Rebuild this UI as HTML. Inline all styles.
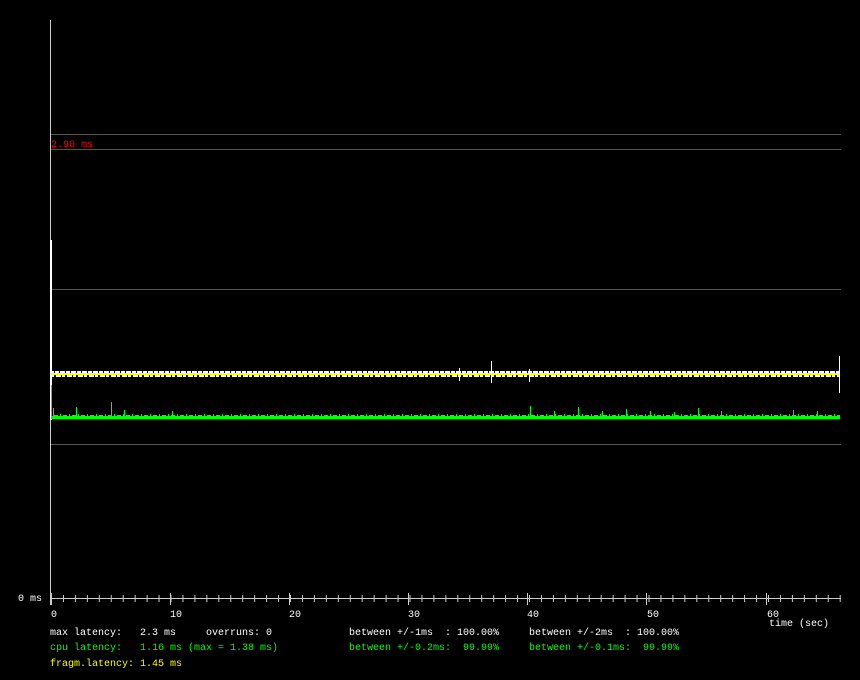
<!DOCTYPE html>
<html><head><meta charset="utf-8"><style>
html,body{margin:0;padding:0;background:#000;width:860px;height:680px;overflow:hidden}
svg{display:block}
text{font-family:"Liberation Mono",monospace;font-size:10px}
</style></head><body>
<svg width="860" height="680" viewBox="0 0 860 680" xmlns="http://www.w3.org/2000/svg">
<defs>
<pattern id="minor" x="51" y="0" width="11.95" height="680" patternUnits="userSpaceOnUse">
<rect x="0" y="595" width="1" height="7" fill="#ccc"/>
</pattern>
<pattern id="wn" x="0" y="0" width="11" height="680" patternUnits="userSpaceOnUse">
<rect x="0" y="371" width="4" height="2" fill="#fff"/>
<rect x="5" y="371" width="5" height="2" fill="#fff"/>
<rect x="1" y="375" width="5" height="2" fill="#fff"/>
<rect x="7" y="375" width="3" height="2" fill="#fff"/>
</pattern>
<pattern id="gn" x="0" y="0" width="9" height="680" patternUnits="userSpaceOnUse">
<rect x="0" y="415" width="4" height="1" fill="#0f0"/>
<rect x="6" y="414" width="1" height="2" fill="#0f0"/>
</pattern>
</defs>
<g fill="#555">
<rect x="51" y="134" width="790" height="1"/>
<rect x="51" y="149" width="790" height="1"/>
<rect x="51" y="289" width="790" height="1"/>
<rect x="51" y="444" width="790" height="1"/>
</g>
<text x="51" y="147" fill="#f00">2.90 ms</text>
<rect x="50" y="20" width="1" height="585" fill="#ccc"/>
<rect x="50" y="240" width="2" height="180" fill="#fff"/>
<rect x="51" y="371" width="789" height="6" fill="url(#wn)"/>
<rect x="51" y="373" width="789" height="2" fill="#ff0"/>
<g fill="#fff">
<rect x="459" y="368" width="1" height="13"/>
<rect x="491" y="361" width="1" height="22"/>
<rect x="529" y="369" width="1" height="13"/>
<rect x="839" y="356" width="1" height="37"/>
</g>
<rect x="51" y="414" width="789" height="2" fill="url(#gn)"/>
<rect x="51" y="416" width="789" height="3" fill="#0f0"/>
<g fill="#0f0">
<rect x="51" y="385" width="1" height="31"/>
<rect x="53" y="408" width="1" height="8"/>
<rect x="76" y="407" width="1" height="9"/>
<rect x="111" y="402" width="1" height="14"/>
<rect x="124" y="410" width="1" height="6"/>
<rect x="172" y="411" width="1" height="5"/>
<rect x="530" y="406" width="1" height="10"/>
<rect x="554" y="411" width="1" height="5"/>
<rect x="578" y="407" width="1" height="9"/>
<rect x="602" y="411" width="1" height="5"/>
<rect x="626" y="409" width="1" height="7"/>
<rect x="650" y="411" width="1" height="5"/>
<rect x="674" y="412" width="1" height="4"/>
<rect x="698" y="408" width="1" height="8"/>
<rect x="721" y="411" width="1" height="5"/>
<rect x="793" y="410" width="1" height="6"/>
<rect x="817" y="411" width="1" height="5"/>
</g>
<rect x="51" y="598" width="790" height="1" fill="#ccc"/>
<rect x="51" y="595" width="790" height="7" fill="url(#minor)"/>
<g fill="#ccc">
<rect x="51" y="593" width="1" height="12"/>
<rect x="170" y="593" width="1" height="12"/>
<rect x="289" y="593" width="1" height="12"/>
<rect x="408" y="593" width="1" height="12"/>
<rect x="527" y="593" width="1" height="12"/>
<rect x="646" y="593" width="1" height="12"/>
<rect x="766" y="593" width="1" height="12"/>
</g>
<g fill="#fff">
<text x="18" y="601">0 ms</text>
<text x="51" y="617">0</text>
<text x="170" y="617">10</text>
<text x="289" y="617">20</text>
<text x="408" y="617">30</text>
<text x="527" y="617">40</text>
<text x="647" y="617">50</text>
<text x="767" y="617">60</text>
<text x="769" y="626">time (sec)</text>
<text x="50" y="635" xml:space="preserve">max latency:   2.3 ms     overruns: 0</text>
<text x="349" y="635" xml:space="preserve">between +/-1ms  : 100.00%</text>
<text x="529" y="635" xml:space="preserve">between +/-2ms  : 100.00%</text>
</g>
<g fill="#0f0">
<text x="50" y="650" xml:space="preserve">cpu latency:   1.16 ms (max = 1.38 ms)</text>
<text x="349" y="650" xml:space="preserve">between +/-0.2ms:  99.99%</text>
<text x="529" y="650" xml:space="preserve">between +/-0.1ms:  99.99%</text>
</g>
<text x="50" y="666" fill="#ff0">fragm.latency: 1.45 ms</text>
</svg>
</body></html>
